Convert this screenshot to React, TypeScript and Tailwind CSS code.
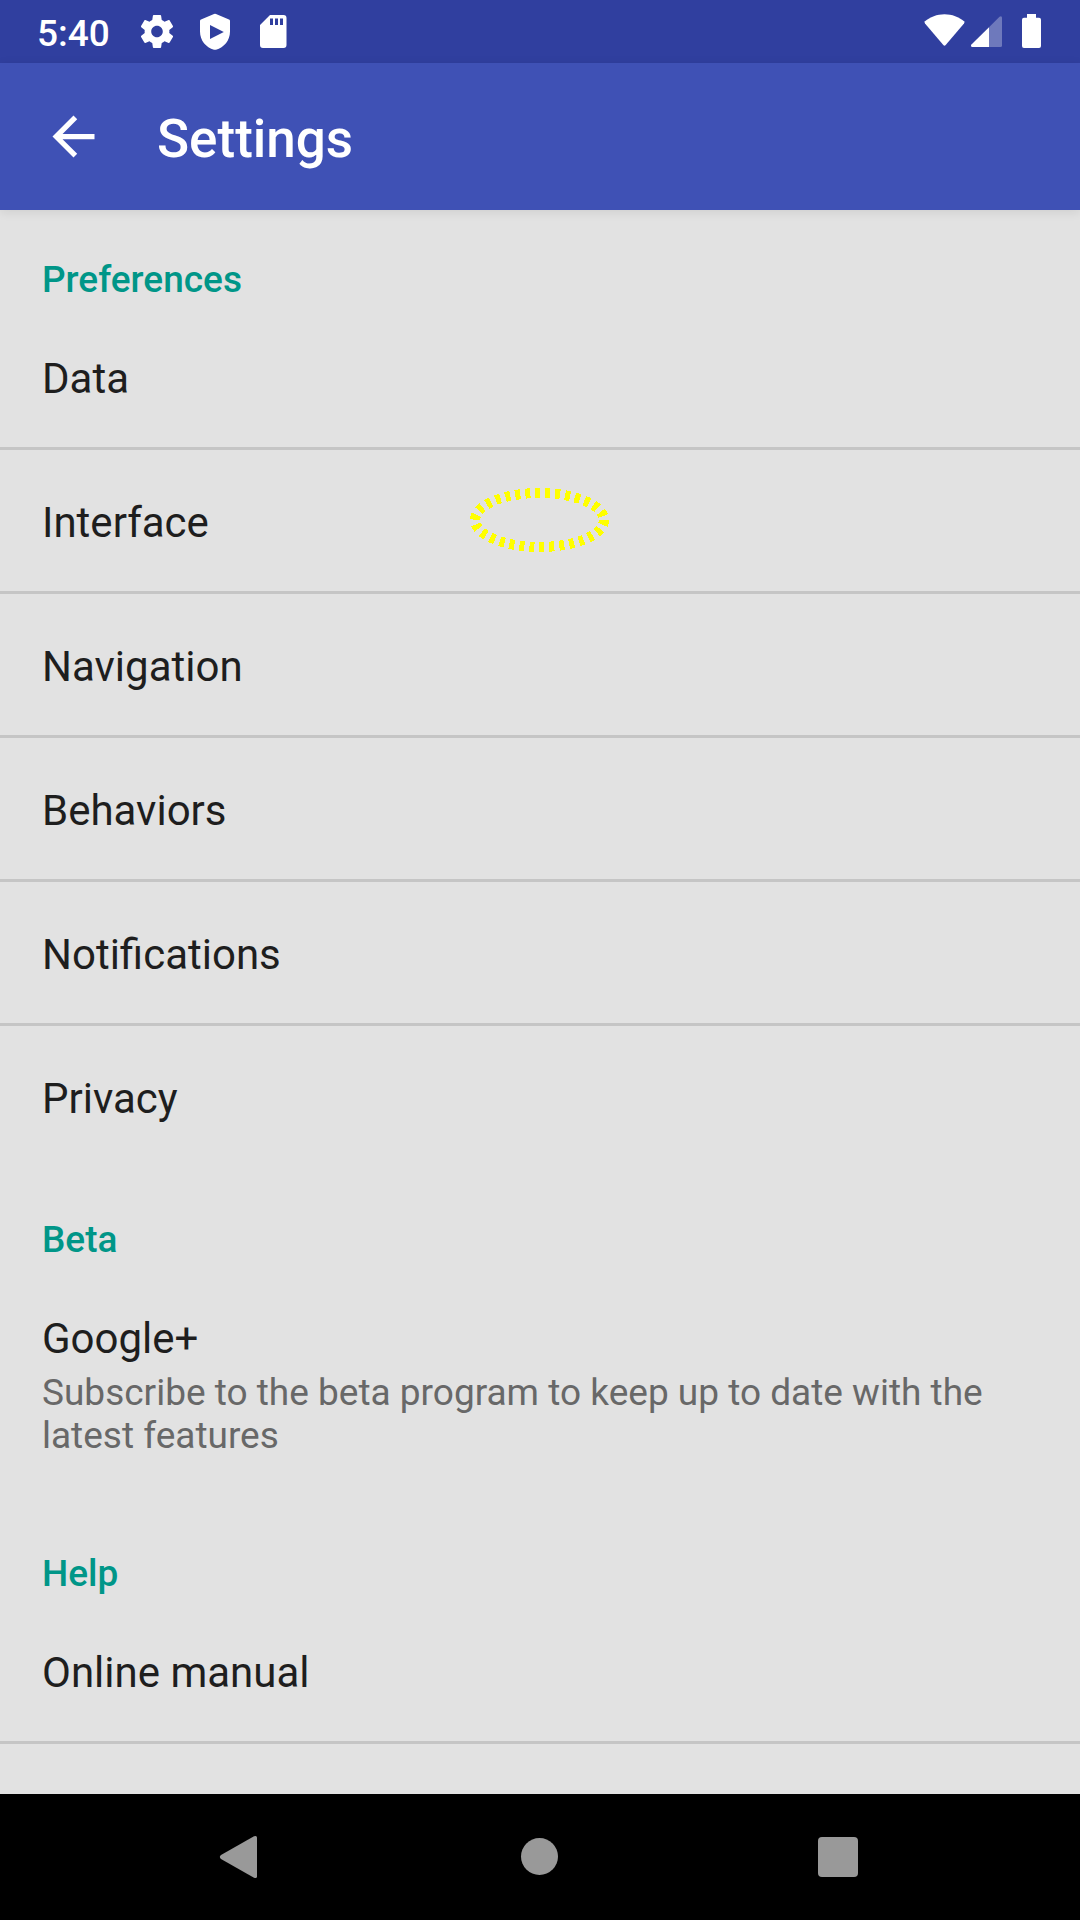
import type { ReactNode } from "react";

function StatusBar() {
  return (
    <div className="flex h-[63px] shrink-0 items-start justify-between bg-[#303f9f] text-white">
      <div className="flex h-[63px]">
        <span className="w-[137px] pt-[12px] pl-[37px] text-[37px] leading-[43px] font-medium">5:40</span>
        <svg width="160" height="63" viewBox="137 0 160 63" fill="currentColor">
          <path
            transform="translate(137.2 11.7) scale(1.65)"
            d="M19.43 12.98c.04-.32.07-.64.07-.98s-.03-.66-.07-.98l2.11-1.65c.19-.15.24-.42.12-.64l-2-3.46c-.12-.22-.39-.3-.61-.22l-2.49 1c-.52-.4-1.08-.73-1.69-.98l-.38-2.65C14.46 2.18 14.25 2 14 2h-4c-.25 0-.46.18-.49.42l-.38 2.65c-.61.25-1.17.59-1.69.98l-2.49-1c-.23-.09-.49 0-.61.22l-2 3.46c-.13.22-.07.49.12.64l2.11 1.65c-.04.32-.07.65-.07.98s.03.66.07.98l-2.11 1.65c-.19.15-.24.42-.12.64l2 3.46c.12.22.39.3.61.22l2.49-1c.52.4 1.08.73 1.69.98l.38 2.65c.03.24.24.42.49.42h4c.25 0 .46-.18.49-.42l.38-2.65c.61-.25 1.17-.59 1.69-.98l2.49 1c.23.09.49 0 .61-.22l2-3.46c.12-.22.07-.49-.12-.64l-2.11-1.65zM12 15.5c-1.93 0-3.5-1.57-3.5-3.5s1.57-3.5 3.5-3.5 3.5 1.57 3.5 3.5-1.57 3.5-3.5 3.5z"
          />
          <path
            fillRule="evenodd"
            d="M214 14.1q1-.5 2 0l13 5.3q1 .4 1 1.5v10.6c0 9-6 16-14 18.2q-1 .3-2 0c-8-2.200-14-9.200-14-18.200V20.900q0-1.100 1-1.500ZM210 25v14l13.800-7Z"
          />
          <path
            fillRule="evenodd"
            d="M270 15h13.500q3 0 3 3v27q0 3-3 3h-20.500q-3 0-3-3V25ZM270 18.500v6.500h3v-6.500ZM275 18.500v6.500h3v-6.500ZM280 18.500v6.500h3v-6.500Z"
          />
        </svg>
      </div>
      <svg width="180" height="63" viewBox="900 0 180 63" fill="currentColor">
        <path d="M925 23.500q-1-1.200 0-2.200C930 17 937 14.200 944.500 14.200S959 17 964 21.300q1 1 0 2.200L945.700 45q-1.200 1.300-2.400 0Z" />
        <path fillOpacity="0.3" d="M989 27.300 999.500 16.700q2.500-1.500 2.500 1.300v27.500q0 1.500-1.500 1.500H989Z" />
        <path d="M989 27.300V47H972q-1.800-.4-.8-2.200Z" />
        <path d="M1027 14h9v3.700h3q2 0 2 2V46q0 2-2 2h-15q-2 0-2-2V19.700q0-2 2-2h3Z" />
      </svg>
    </div>
  );
}

function AppBar() {
  return (
    <header className="z-10 flex h-[147px] shrink-0 items-center bg-[#3f51b5] pl-[42px] text-white shadow-[0_2px_10px_rgba(0,0,0,0.09)]">
      <svg className="size-[63px]" viewBox="0 0 24 24" fill="currentColor">
        <path d="M20 11H7.830l5.590-5.590L12 4l-8 8 8 8 1.410-1.410L7.830 13H20v-2z" />
      </svg>
      <h1 className="pt-[4px] pl-[52px] text-[53px] leading-[62px] font-medium">Settings</h1>
    </header>
  );
}

function SectionTitle({ children }: { children: ReactNode }) {
  return (
    <h2 className="h-[96px] pt-[48px] pl-[42px] text-[37px] leading-[43px] font-medium text-[#009688]">
      {children}
    </h2>
  );
}

function Row({ title, divider = true, marked = false }: { title: string; divider?: boolean; marked?: boolean }) {
  return (
    <div
      className={`relative h-[144px] border-b-[3px] pt-[48px] pl-[42px] text-[42px] leading-[49px] text-[#1e1e1e] ${divider ? "border-[#c5c5c5]" : "border-transparent"}`}
    >
      {title}
      {marked && (
        <svg className="absolute top-[34px] left-[465px]" width="150" height="72" viewBox="465 484 150 72" shapeRendering="crispEdges">
          <ellipse cx="539.500" cy="520" rx="64.5" ry="27" fill="none" stroke="#ffff00" strokeWidth="10" strokeDasharray="5 5" />
        </svg>
      )}
    </div>
  );
}

function NavigationBar() {
  return (
    <nav className="flex h-[126px] shrink-0 items-center justify-between bg-black px-[218px]">
      <svg width="42" height="44" viewBox="218 1835 42 44" fill="#999999">
        <path d="M254 1836.300q3-1.300 3 1.500v38.400q0 2.800-3 1.500L221 1859q-2.300-2 0-4Z" />
      </svg>
      <svg width="38" height="38" viewBox="0 0 38 38" fill="#999999">
        <circle cx="19.500" cy="18.500" r="18.500" />
      </svg>
      <svg width="44" height="44" viewBox="818 1835 44 44" fill="#999999">
        <rect x="818" y="1837" width="40" height="40" rx="4" />
      </svg>
    </nav>
  );
}

export default function App() {
  return (
    <div className="flex h-[1920px] w-[1080px] flex-col overflow-hidden bg-[#e2e2e2] font-[Roboto,sans-serif]">
      <StatusBar />
      <AppBar />
      <main className="min-h-0 flex-1 overflow-hidden">
        <SectionTitle>Preferences</SectionTitle>
        <Row title="Data" />
        <Row title="Interface" marked />
        <Row title="Navigation" />
        <Row title="Behaviors" />
        <Row title="Notifications" />
        <Row title="Privacy" divider={false} />
        <SectionTitle>Beta</SectionTitle>
        <div className="h-[238px] pt-[48px] pl-[42px]">
          <div className="text-[42px] leading-[49px] text-[#1e1e1e]">Google+</div>
          <p className="w-[996px] pt-[8px] text-[37px] leading-[43px] text-[#686868]">
            Subscribe to the beta program to keep up to date with the<br />latest features
          </p>
        </div>
        <SectionTitle>Help</SectionTitle>
        <Row title="Online manual" />
      </main>
      <NavigationBar />
    </div>
  );
}
